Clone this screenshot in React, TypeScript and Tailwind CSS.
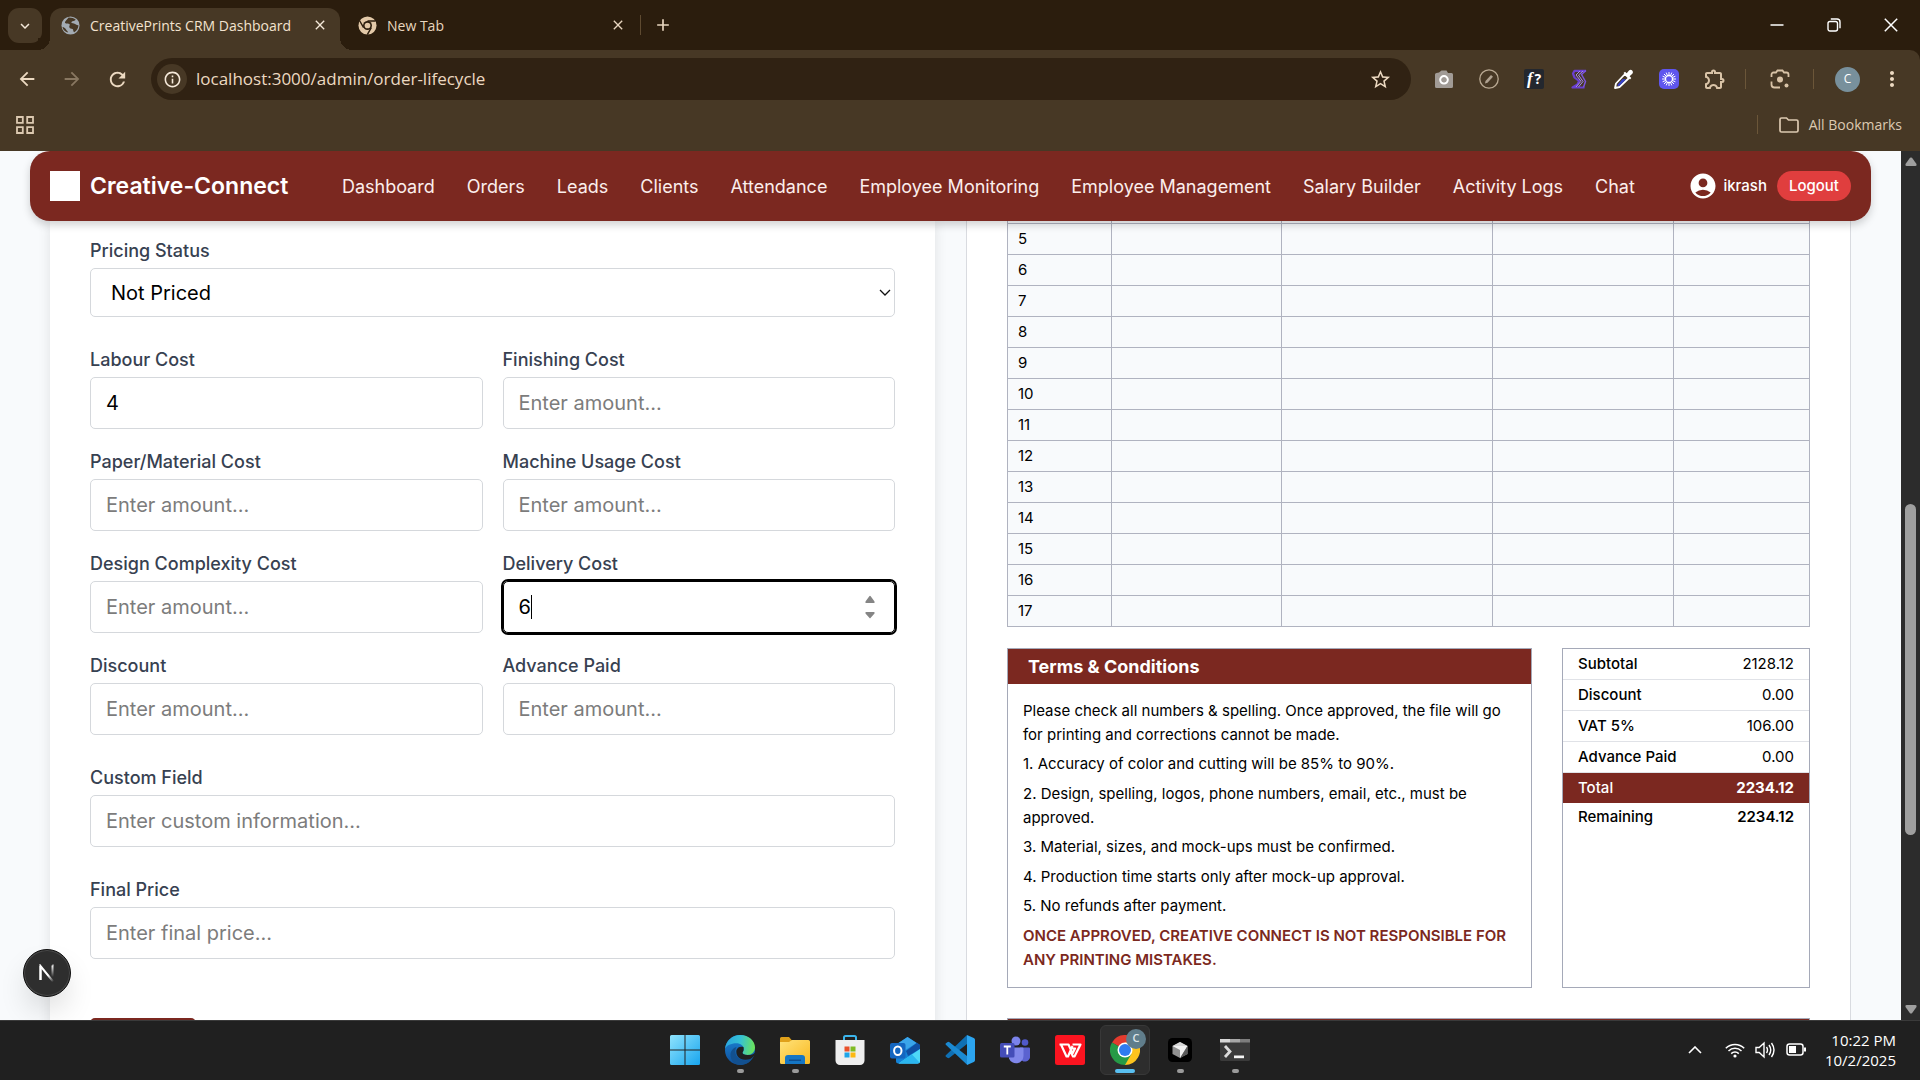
import React from "react";
import {
  MdAccountCircle,
  MdArrowBack,
  MdArrowForward,
  MdRefresh,
  MdOutlineInfo,
  MdStarBorder,
  MdOutlineExtension,
  MdMoreVert,
  MdClose,
  MdAdd,
  MdExpandMore,
} from "react-icons/md";

const CHROME_FONT = "font-['Open_Sans','Noto_Sans',sans-serif]";

/* ---------- browser window ---------- */

function GlobeIcon() {
  return (
    <svg viewBox="0 0 20 20" className="size-[19px]" aria-hidden="true">
      <circle cx="10" cy="10" r="9.5" fill="#a3abb3" />
      <path d="M8 1.5c3 .6 6 .2 7.500 2.500-1 1.600-3.500 1-4.500 2.400-.6 1.200 1.200 1.300 2.600 1.600 2 .5 2.600 1.900 4.800 1.700-.2 3.300-2 5.900-4.500 7.300-1.500-.4-.5-2.300-1.700-3.200-1.300-.9-3.200-.3-3.500-2.200-.2-1.500 1-1.900.4-2.900C8 7.600 5.600 8.600 4.300 7.300 3.600 5.800 6.500 3.500 8 1.500Z" fill="#473825" />
      <path d="M1.500 11.500c1.800.2 3.300 1.300 4 2.900.5 1.300 1.800 1.400 2 3-3.200-.7-5.500-3-6-5.900Z" fill="#473825" />
    </svg>
  );
}

function ChromeMono() {
  return (
    <svg viewBox="0 0 20 20" className="size-[19px]" aria-hidden="true">
      <circle cx="10" cy="10" r="9.500" fill="#e3c9a8" />
      <circle cx="10" cy="10" r="4.700" fill="#2b1d0d" />
      <circle cx="10" cy="10" r="3" fill="#e3c9a8" />
      <path d="M10 5.300h8.500M5.900 12.300 1.700 5M14 12.300 9.800 19.500" stroke="#2b1d0d" strokeWidth="1.500" />
    </svg>
  );
}

function TabStrip() {
  return (
    <header className="flex h-[50px] shrink-0 items-end bg-[#2b1d0d] pl-[8px] text-[#e8d6bf]">
      <button aria-label="Search tabs" className="mb-[7px] flex h-[35px] w-[34px] items-center justify-center rounded-[11px] bg-[#473825] text-[#f5e9da]">
        <MdExpandMore size={18} />
      </button>
      <div className="relative ml-[8px] flex h-[42px] w-[290px] items-center rounded-t-[12px] bg-[#473825] pb-[8px] pl-[11px] pr-[12px]">
        <span className="absolute -left-[12px] bottom-0 size-[12px] bg-[radial-gradient(circle_at_0_0,#2b1d0d_12px,#473825_12px)]" />
        <span className="absolute -right-[12px] bottom-0 size-[12px] bg-[radial-gradient(circle_at_100%_0,#2b1d0d_12px,#473825_12px)]" />
        <GlobeIcon />
        <span className="ml-[10px] flex-1 whitespace-nowrap text-[14px] text-[#f3e3cf]">CreativePrints CRM Dashboard</span>
        <button aria-label="Close tab" className="text-[#f5e9da]"><MdClose size={16} /></button>
      </div>
      <div className="flex h-[42px] w-[300px] items-center pb-[8px] pl-[18px] pr-[14px]">
        <ChromeMono />
        <span className="ml-[10px] flex-1 text-[14px]">New Tab</span>
        <button aria-label="Close tab"><MdClose size={16} /></button>
      </div>
      <div className="flex h-[42px] items-center gap-[12px] pb-[8px]">
        <span className="h-[20px] w-px bg-[#5e4a30]" />
        <button aria-label="New tab"><MdAdd size={20} /></button>
      </div>
      <div className="ml-auto flex h-[50px] items-center pr-[22px] text-white">
        <button aria-label="Minimize" className="mr-[43px]">
          <svg viewBox="0 0 14 14" className="size-[14px]"><path d="M.5 7h13" stroke="currentColor" strokeWidth="1.500" /></svg>
        </button>
        <button aria-label="Restore" className="mr-[43px]">
          <svg viewBox="0 0 14 14" className="size-[14px]" fill="none" stroke="currentColor" strokeWidth="1.400">
            <rect x="1" y="3.500" width="9.500" height="9.500" rx="2" />
            <path d="M3.800 1H10a3 3 0 0 1 3 3v6.200" />
          </svg>
        </button>
        <button aria-label="Close">
          <svg viewBox="0 0 14 14" className="size-[14px]"><path d="m.8.8 12.400 12.400M13.200.8.800 13.200" stroke="currentColor" strokeWidth="1.500" /></svg>
        </button>
      </div>
    </header>
  );
}

function Extensions() {
  return (
    <div className="flex items-center gap-[25px]">
      <svg viewBox="0 0 20 20" className="size-[20px]" aria-hidden="true">
        <path d="M5 3.500 7.500 1.500h5l1.500 2.500h3.500A1.500 1.500 0 0 1 19 5.500v12a1.500 1.500 0 0 1-1.500 1.500h-15A1.500 1.500 0 0 1 1 17.500v-12A1.500 1.500 0 0 1 2.500 4Z" fill="#a19b96" />
        <circle cx="10" cy="10.800" r="3.700" fill="none" stroke="#fff" strokeWidth="2.200" />
        <circle cx="10" cy="10.800" r="2.500" fill="#a19b96" />
      </svg>
      <svg viewBox="0 0 20 20" className="size-[20px]" aria-hidden="true">
        <circle cx="10" cy="10" r="9.200" fill="none" stroke="#b9a993" strokeWidth="1.300" />
        <path d="m6.500 12 5.500-6 2 1.800-5.500 6-2.500.7Z" fill="#b0a291" />
      </svg>
      <svg viewBox="0 0 20 20" className="size-[20px]" aria-hidden="true">
        <rect width="20" height="20" rx="2" fill="#23272e" />
        <text x="3" y="14.500" fontSize="17" fontStyle="italic" fontWeight="700" fill="#fff" fontFamily="Liberation Serif, serif">f</text>
        <text x="10.500" y="15" fontSize="14" fontWeight="700" fill="#fff" fontFamily="Open Sans, sans-serif">?</text>
      </svg>
      <svg viewBox="0 0 20 20" className="size-[20px]" fill="none" aria-hidden="true">
        <path d="M17 1.800H5.500L4 4.500l1.500 4L10 12l-1.500 3.500-5 3h12" stroke="#6a3fd0" strokeWidth="2.200" strokeLinejoin="round" />
        <path d="M17 1.500 12.500 5.500l4 7-2 5.800" stroke="#7b55dc" strokeWidth="1.500" />
        <path d="M14 2 9.500 6l4.500 6.500-4.500 5.500M11 2 7 6l5 6.300-5 5.700" stroke="#a58cf0" strokeWidth="1" />
      </svg>
      <svg viewBox="0 0 20 20" className="size-[20px]" aria-hidden="true">
        <path d="m11 5-9 9.500-1 4.500 4.500-1 9.500-9Z" fill="#473825" stroke="#fff" strokeWidth="1.800" strokeLinejoin="round" />
        <path d="m8.500 10 3.500.3-6.500 6.500-2 .4.500-2Z" fill="#3742c8" />
        <path d="M9.500 4 11 2.700l1.700 1.600L15 1.500c2.200-2 5.200 1 3.300 3.300L15.600 7.300 17.300 9 16 10.500Z" fill="#fff" />
      </svg>
      <svg viewBox="0 0 20 20" className="size-[20px]" aria-hidden="true">
        <rect width="20" height="20" rx="5" fill="#5f55ee" />
        <circle cx="10" cy="10" r="3.500" fill="none" stroke="#fff" strokeWidth="1.300" />
        <path d="M10 3v3.500M10 13.500V17M3 10h3.500M13.500 10H17M5 5l2.500 2.500M12.500 12.500 15 15M15 5l-2.500 2.500M7.500 12.500 5 15M7.200 3.600l1.300 3M11.500 13.400l1.300 3M3.600 12.800l3-1.300M13.400 8.500l3-1.300M3.600 7.200l3 1.300M13.400 11.500l3 1.300M12.800 3.600l-1.300 3M8.500 13.400l-1.300 3" stroke="#fff" strokeWidth="1" />
      </svg>
      <MdOutlineExtension size={24} className="-mx-[1px] text-[#d9c3a7]" />
    </div>
  );
}

function Toolbar() {
  return (
    <div className="flex h-[58px] shrink-0 items-center rounded-tr-[10px] bg-[#473825] pl-[16px] pr-[16px] text-[#ecd9c1]">
      <button aria-label="Back"><MdArrowBack size={22} /></button>
      <button aria-label="Forward" className="ml-[23px] text-[#887761]"><MdArrowForward size={22} /></button>
      <button aria-label="Reload" className="ml-[23px]"><MdRefresh size={23} /></button>
      <div className="ml-[22px] flex h-[42px] flex-1 items-center rounded-full bg-[#302213] pl-[6px] pr-[19px]">
        <button aria-label="Site information" className="flex size-[30px] items-center justify-center rounded-full bg-[#473825] text-[#f5e9da]">
          <MdOutlineInfo size={19} />
        </button>
        <input
          aria-label="Address"
          defaultValue="localhost:3000/admin/order-lifecycle"
          className="ml-[9px] min-w-0 flex-1 bg-transparent text-[17px] text-[#ecd9c1] outline-none"
        />
        <button aria-label="Bookmark this tab"><MdStarBorder size={23} /></button>
      </div>
      <div className="ml-[23px]"><Extensions /></div>
      <span className="ml-[19px] h-[20px] w-px bg-[#6b5639]" />
      <button aria-label="Lens" className="ml-[24px] text-[#d9c3a7]">
        <svg viewBox="0 0 20 20" className="size-[20px]" fill="none" stroke="currentColor" strokeWidth="1.800">
          <path d="M1.500 8V5.500a2 2 0 0 1 2-2H6L7.500 1.500h5L14 3.500h2.500a2 2 0 0 1 2 2V8M1.500 12.500v3a3 3 0 0 0 3 3H10" />
          <circle cx="10" cy="10.500" r="3" fill="currentColor" stroke="none" />
          <circle cx="16.500" cy="16.500" r="2" fill="currentColor" stroke="none" />
        </svg>
      </button>
      <span className="ml-[23px] h-[20px] w-px bg-[#6b5639]" />
      <button aria-label="Profile" className="ml-[21px] flex size-[25px] items-center justify-center rounded-full bg-[#78909c] text-[12px] text-white">C</button>
      <button aria-label="Menu" className="ml-[20px]"><MdMoreVert size={24} /></button>
    </div>
  );
}

function BookmarksBar() {
  return (
    <div className="flex h-[43px] shrink-0 items-center bg-[#473825] pb-[10px] pl-[16px] pr-[18px] text-[#dcc9b1]">
      <button aria-label="Apps">
        <svg viewBox="0 0 18 18" className="size-[18px]" fill="none" stroke="currentColor" strokeWidth="1.800">
          <path d="M1 1h5.800v5.800H1zM11.200 1H17v5.800h-5.800zM1 11.200h5.800V17H1zM11.200 11.200H17V17h-5.800z" />
        </svg>
      </button>
      <span className="ml-auto h-[19px] w-px bg-[#6b5639]" />
      <button className="ml-[21px] flex items-center gap-[10px] text-[14px]">
        <svg viewBox="0 0 20 16" className="h-[16px] w-[20px]" fill="none" stroke="currentColor" strokeWidth="1.700">
          <path d="M1 2.500A1.500 1.500 0 0 1 2.500 1H7.500L9.500 3h8A1.500 1.500 0 0 1 19 4.500v9a1.500 1.500 0 0 1-1.500 1.500h-15A1.500 1.500 0 0 1 1 13.500Z" />
        </svg>
        All Bookmarks
      </button>
    </div>
  );
}

/* ---------- web page ---------- */

const NAV = [
  "Dashboard", "Orders", "Leads", "Clients", "Attendance", "Employee Monitoring",
  "Employee Management", "Salary Builder", "Activity Logs", "Chat",
];

function Navbar() {
  return (
    <nav className="relative z-10 mx-[30px] flex h-[70px] shrink-0 items-center justify-between whitespace-nowrap rounded-[20px] bg-[#7b2820] px-[20px] text-white shadow-[0_4px_8px_rgba(0,0,0,0.18)]">
      <div className="flex items-center gap-[10px]">
        <span className="size-[30px] bg-white" />
        <span className="text-[23px] font-semibold">Creative-Connect</span>
      </div>
      <div className="flex items-center gap-[32px] text-[18px] text-[#fbeeec]">
        {NAV.map((n) => (
          <a key={n} href="#">{n}</a>
        ))}
      </div>
      <div className="flex items-center text-[15px] font-medium">
        <MdAccountCircle size={30} />
        <span className="ml-[5px]">ikrash</span>
        <button className="ml-[10px] h-[30px] rounded-full bg-[#e03e3e] px-[12px]">Logout</button>
      </div>
    </nav>
  );
}

function Field({ id, label, placeholder = "Enter amount...", value, type = "number", focused = false }: {
  id: string; label: string; placeholder?: string; value?: string; type?: "number" | "text"; focused?: boolean;
}) {
  return (
    <div>
      <label htmlFor={id} className="mb-[5px] block text-[18px] font-medium leading-[25px] text-[#374151]">{label}</label>
      <div className="relative">
        <input
          id={id}
          type={type}
          placeholder={placeholder}
          defaultValue={value}
          className={
            focused
              ? "block h-[52px] w-full rounded-[5px] border border-black px-[15px] text-[20px] text-black outline-2 outline-black [appearance:textfield]"
              : "block h-[52px] w-full rounded-[5px] border border-[#d5d8dc] px-[15px] text-[20px] text-black [appearance:textfield] placeholder:text-[#7c7c7c]"
          }
        />
        {focused && (
          <>
            <span className="absolute left-[28px] top-[14px] h-[24px] w-px bg-black" />
            <svg viewBox="0 0 10 24" className="absolute right-[20px] top-[14px] h-[24px] w-[10px]" fill="#858585" aria-hidden="true">
              <path d="M4.300 1.200Q5 .2 5.700 1.200L9.500 6.400Q10 8 9 8H1Q0 8 .5 6.400ZM4.300 22.800Q5 23.800 5.700 22.800L9.500 18.600Q10 17 9 17H1Q0 17 .5 18.600Z" />
            </svg>
          </>
        )}
      </div>
    </div>
  );
}

function PricingForm() {
  return (
    <form className="bg-white px-[40px] pt-[17px] shadow-[0_2px_12px_rgba(0,0,0,0.1)]">
      <label htmlFor="status" className="mb-[5px] block text-[18px] font-medium leading-[25px] text-[#374151]">Pricing Status</label>
      <div className="relative mb-[30px]">
        <select id="status" className="block h-[49px] w-full appearance-none rounded-[5px] border border-[#d5d8dc] bg-white px-[20px] text-[20px] text-black">
          <option>Not Priced</option>
        </select>
        <svg viewBox="0 0 12 8" className="pointer-events-none absolute right-[4px] top-[21px] h-[8px] w-[12px]" fill="none" stroke="#111" strokeWidth="1.300" aria-hidden="true">
          <path d="m1 1 5 5 5-5" />
        </svg>
      </div>
      <div className="mb-[30px] grid grid-cols-2 gap-[20px]">
        <Field id="labour" label="Labour Cost" value="4" />
        <Field id="finishing" label="Finishing Cost" />
        <Field id="paper" label="Paper/Material Cost" />
        <Field id="machine" label="Machine Usage Cost" />
        <Field id="design" label="Design Complexity Cost" />
        <Field id="delivery" label="Delivery Cost" value="6" focused />
        <Field id="discount" label="Discount" />
        <Field id="advance" label="Advance Paid" />
      </div>
      <div className="flex flex-col gap-[30px]">
        <Field id="custom" label="Custom Field" placeholder="Enter custom information..." type="text" />
        <Field id="final" label="Final Price" placeholder="Enter final price..." />
      </div>
      <button type="button" aria-label="Save" className="mt-[59px] h-[45px] w-[106px] rounded-[5px] bg-[#7b2820]" />
    </form>
  );
}

const ROWS = ["5", "6", "7", "8", "9", "10", "11", "12", "13", "14", "15", "16", "17"];
const CELL = "border border-[#b0b3c0]";

const TERMS = [
  "Please check all numbers & spelling. Once approved, the file will go for printing and corrections cannot be made.",
  "1. Accuracy of color and cutting will be 85% to 90%.",
  "2. Design, spelling, logos, phone numbers, email, etc., must be approved.",
  "3. Material, sizes, and mock-ups must be confirmed.",
  "4. Production time starts only after mock-up approval.",
  "5. No refunds after payment.",
];

const TOTALS = [
  ["Subtotal", "2128.12"],
  ["Discount", "0.00"],
  ["VAT 5%", "106.00"],
  ["Advance Paid", "0.00"],
];

function Quotation() {
  return (
    <section className="border-x border-[#d9dbe0] bg-white px-[40px] text-[15px] text-black">
      <table className="w-full table-fixed border-collapse bg-[#f8fafc]">
        <colgroup>
          <col className="w-[104px]" />
          <col className="w-[170px]" />
          <col className="w-[211px]" />
          <col className="w-[181px]" />
          <col />
        </colgroup>
        <tbody>
          <tr className="h-[2px]">
            {[0, 1, 2, 3, 4].map((c) => (
              <td key={c} className="border-x border-b border-[#b0b3c0] p-0" />
            ))}
          </tr>
          {ROWS.map((r) => (
            <tr key={r} className="h-[31px]">
              <td className={CELL + " px-[10px] py-0 leading-[20px]"}>{r}</td>
              <td className={CELL} />
              <td className={CELL} />
              <td className={CELL} />
              <td className={CELL} />
            </tr>
          ))}
        </tbody>
      </table>
      <div className="mt-[21px] grid grid-cols-[minmax(0,1fr)_248px] gap-[30px]">
        <div className="border border-[#a5a9b8] pb-[15px]">
          <h3 className="h-[35px] bg-[#7b2820] px-[20px] text-[18px] font-bold leading-[35px] text-white">Terms &amp; Conditions</h3>
          <div className="flex flex-col gap-[5px] px-[15px] pt-[15px] leading-relaxed">
            {TERMS.map((t) => (
              <p key={t}>{t}</p>
            ))}
            <p className="font-semibold text-[#7b2820]">ONCE APPROVED, CREATIVE CONNECT IS NOT RESPONSIBLE FOR ANY PRINTING MISTAKES.</p>
          </div>
        </div>
        <div className="border border-[#a5a9b8]">
          <table className="w-full border-collapse">
            <tbody>
              {TOTALS.map(([k, v]) => (
                <tr key={k} className="h-[31px] border-b border-[#e0e2e7]">
                  <th scope="row" className="py-0 pl-[15px] text-left font-medium">{k}</th>
                  <td className="py-0 pr-[15px] text-right">{v}</td>
                </tr>
              ))}
              <tr className="h-[30px] bg-[#7b2820] text-white">
                <th scope="row" className="py-0 pl-[15px] text-left font-medium">Total</th>
                <td className="py-0 pr-[15px] text-right font-bold">2234.12</td>
              </tr>
              <tr className="h-[30px]">
                <th scope="row" className="py-0 pl-[15px] text-left font-medium">Remaining</th>
                <td className="py-0 pr-[15px] text-right font-semibold">2234.12</td>
              </tr>
            </tbody>
          </table>
        </div>
      </div>
      <div className="mt-[30px] h-[40px] border border-[#a5a9b8] bg-[#7b2820]" />
    </section>
  );
}

function Scrollbar() {
  return (
    <div className="flex w-[19px] shrink-0 flex-col items-center bg-[#2c2c2c] py-[6px]" aria-hidden="true">
      <svg viewBox="0 0 12 9" className="h-[9px] w-[12px]" fill="#9f9f9f"><path d="M5 .8Q6 0 7 .8L11.500 7Q12 9 10.500 9h-9Q0 9 .5 7Z" /></svg>
      <div className="h-[338px]" />
      <div className="h-[331px] w-[11px] rounded-full bg-[#9f9f9f]" />
      <svg viewBox="0 0 12 9" className="mt-auto h-[9px] w-[12px]" fill="#9f9f9f"><path d="M5 8.200Q6 9 7 8.200L11.500 2Q12 0 10.500 0h-9Q0 0 .5 2Z" /></svg>
    </div>
  );
}

function DevBadge() {
  return (
    <button aria-label="Open developer tools" className="absolute bottom-[23px] left-[23px] z-20 flex size-[48px] items-center justify-center rounded-full border border-[#111] bg-[#2e2e2e] shadow-[0_16px_32px_-8px_rgba(0,0,0,0.24)] ring-1 ring-inset ring-[#4a4a4a]">
      <svg viewBox="0 0 18 18" className="size-[18px]" fill="none" strokeWidth="2">
        <defs>
          <linearGradient id="nd" x1="8" y1="9" x2="15" y2="17" gradientUnits="userSpaceOnUse"><stop offset=".3" stopColor="#fff" /><stop offset="1" stopColor="#fff" stopOpacity="0.100" /></linearGradient>
          <linearGradient id="nv" x1="0" y1="1" x2="0" y2="13" gradientUnits="userSpaceOnUse"><stop stopColor="#fff" /><stop offset="1" stopColor="#fff" stopOpacity="0" /></linearGradient>
        </defs>
        <path d="M2.500 16V2l12.500 15.500" stroke="url(#nd)" />
        <path d="M2.500 16V2" stroke="#fff" />
        <path d="M14.500 1.500h.01V13" stroke="url(#nv)" />
      </svg>
    </button>
  );
}

/* ---------- taskbar ---------- */

const svgCls = "size-[30px]";

const APPS: { name: string; running?: boolean; active?: boolean; icon: React.ReactNode }[] = [
  {
    name: "Start",
    icon: (
      <svg viewBox="0 0 30 30" className={svgCls}>
        <defs><linearGradient id="win" x1="0" y1="0" x2="1" y2="1"><stop stopColor="#8fe3fd" /><stop offset="1" stopColor="#18a5ee" /></linearGradient></defs>
        <path d="M1.500 0h13v14.500H0v-13A1.500 1.500 0 0 1 1.500 0ZM15.500 0h13A1.500 1.500 0 0 1 30 1.500v13H15.500ZM0 15.500h14.500V30h-13A1.500 1.500 0 0 1 0 28.500ZM15.500 15.500H30v13a1.500 1.500 0 0 1-1.500 1.500h-13Z" fill="url(#win)" />
      </svg>
    ),
  },
  {
    name: "Edge",
    running: true,
    icon: (
      <svg viewBox="0 0 30 30" className={svgCls}>
        <defs>
          <linearGradient id="e1" x1="0" y1=".3" x2="1" y2=".4"><stop stopColor="#2aa5e0" /><stop offset=".5" stopColor="#35c1d5" /><stop offset="1" stopColor="#6be35a" /></linearGradient>
          <linearGradient id="e2" x1="0" y1="0" x2="0" y2="1"><stop stopColor="#1b86d8" /><stop offset="1" stopColor="#0f4f9a" /></linearGradient>
        </defs>
        <circle cx="15" cy="15" r="15" fill="url(#e2)" />
        <path d="M0 14C1 5 8 0 15 0c9 0 15 6 15 12.500 0 4.500-3.500 7.500-7.500 7.500-3.500 0-5-1.200-5-2.200 0-.8 1.200-1.400 1.200-3.800 0-3-3-5.700-7.500-5.700C6 8.300 1.500 10.500 0 14Z" fill="url(#e1)" />
        <path d="M11.500 12C8.500 17 11 25 20 25.500c3 .1 5.500-1 7.500-2.500-2.500 4.500-7 7-12.500 7C9 29.500 5.500 25 5.500 20c0-4 2.500-7 6-8Z" fill="#12508f" />
        <path d="M18.500 12c-3-1-6 0-7 3-1 4.500 2 9.500 8.500 9.800 4 .1 7-1.300 8.500-3.300q2-2 1.500-4c-1.500 2-4.500 2.800-7.500 2.500-3.500 0-5-1.200-5-2.200 0-.8 1.200-1.400 1.200-3.800Z" fill="#202020" />
      </svg>
    ),
  },
  {
    name: "File Explorer",
    running: true,
    icon: (
      <svg viewBox="0 0 30 30" className={svgCls}>
        <defs><linearGradient id="fx" x1="0" y1="0" x2="1" y2="1"><stop stopColor="#ffe27a" /><stop offset="1" stopColor="#f8b920" /></linearGradient></defs>
        <path d="M0 3.500A1.500 1.500 0 0 1 1.500 2H9l3 3.500V9H0Z" fill="#e0a11b" />
        <path d="M0 7h9l3-2h16.500A1.500 1.500 0 0 1 30 6.500v21a1.500 1.500 0 0 1-1.500 1.500h-27A1.500 1.500 0 0 1 0 27.500Z" fill="url(#fx)" />
        <path d="M5 29v-6a3 3 0 0 1 3-3h14a3 3 0 0 1 3 3v6Z" fill="#1576c4" />
        <path d="M9 24.500h12v1.500H9Z" fill="#0e4f91" />
      </svg>
    ),
  },
  {
    name: "Microsoft Store",
    icon: (
      <svg viewBox="0 0 30 30" className={svgCls}>
        <path d="M9 6V2.500A1.500 1.500 0 0 1 10.500 1h9A1.500 1.500 0 0 1 21 2.500V6" fill="none" stroke="#3bb5ec" strokeWidth="2" />
        <path d="M.5 5h29v20.500A4.500 4.500 0 0 1 25 30H5A4.500 4.500 0 0 1 .5 25.500Z" fill="#efefef" />
        <path d="M9.500 11.500h5v5h-5z" fill="#e9512b" /><path d="M15.500 11.500h5v5h-5z" fill="#7fba22" />
        <path d="M9.500 17.500h5v5h-5z" fill="#1fa5e8" /><path d="M15.500 17.500h5v5h-5z" fill="#fdb912" />
      </svg>
    ),
  },
  {
    name: "Outlook",
    icon: (
      <svg viewBox="0 0 30 30" className={svgCls}>
        <path d="M6 9.500 17.500 2 30 10v16a2.500 2.500 0 0 1-2.500 2.500h-19A2.500 2.500 0 0 1 6 26Z" fill="#1483d8" />
        <path d="m8 8.500 9.500-6.500 9 6L14 16Z" fill="#3aa5ea" />
        <path d="M16 16 27 7.800l3 2.200v4L18 21Z" fill="#0f4fa3" />
        <path d="M30 14v12a2.500 2.500 0 0 1-2.500 2.500h-19Z" fill="#4fd8f7" />
        <path d="m15 24 7-4.500 7.500 8-2 1h-19Z" fill="#2bb6ef" />
        <rect x="0" y="8" width="15.500" height="15.500" rx="2" fill="#1466c0" />
        <ellipse cx="7.800" cy="15.700" rx="3.700" ry="4.300" fill="none" stroke="#fff" strokeWidth="2" />
      </svg>
    ),
  },
  {
    name: "Visual Studio Code",
    icon: (
      <svg viewBox="0 0 30 30" className={svgCls}>
        <path d="M.8 20.300 22 0v9L4.500 22.700Q3.500 23.500 2.300 22.800L.7 21.500Q.2 21 .8 20.300Z" fill="#0f70b4" />
        <path d="M.8 9.800 22.300 30V21.300L4.500 7.300Q3.500 6.500 2.300 7.200L.7 8.500Q.2 9 .8 9.800Z" fill="#1b8ad2" />
        <path d="M22 0 28.800 3A2 2 0 0 1 30 4.800v20.400A2 2 0 0 1 28.800 27L22 30V0Z" fill="#2ca5f0" />
      </svg>
    ),
  },
  {
    name: "Teams",
    icon: (
      <svg viewBox="0 0 30 30" className={svgCls}>
        <circle cx="25" cy="7.500" r="3.300" fill="#5059c9" />
        <path d="M20 12.500h9a1 1 0 0 1 1 1v7a5 5 0 0 1-10 2Z" fill="#5b62d0" />
        <circle cx="16" cy="6" r="4.500" fill="#7b83eb" />
        <path d="M10 12.500h12.500a1 1 0 0 1 1 1V21a7.500 7.500 0 0 1-14.500 2.500Z" fill="#8087ea" />
        <rect x="0" y="8" width="14.500" height="14.500" rx="1.500" fill="#444db8" />
        <path d="M3.800 11.500h7M7.300 11.500v8" stroke="#fff" strokeWidth="1.800" />
      </svg>
    ),
  },
  {
    name: "WPS Office",
    icon: (
      <svg viewBox="0 0 30 30" className={svgCls}>
        <rect width="30" height="30" rx="2.500" fill="#fb1420" />
        <path d="M4.500 9.500h9l4 9 2.500-5h-3.500M6 9.500l5.500 12h1.500l4.500-10.500M17.500 9.500h8L19.500 21.500h-1.500l-2.500-5" fill="none" stroke="#fff" strokeWidth="2.200" strokeLinejoin="round" />
      </svg>
    ),
  },
  {
    name: "Chrome",
    active: true,
    icon: (
      <svg viewBox="0 0 30 30" className={svgCls}>
        <path d="M15 15 2 7.500A15 15 0 0 1 28 7.500Z" fill="#e33b2e" />
        <path d="M15 15V7.500h13A15 15 0 0 1 15 30Z" fill="#fcc31e" />
        <path d="M15 15 21.500 18.800 15 30A15 15 0 0 1 2 7.500Z" fill="#269a46" />
        <circle cx="15" cy="15" r="7.500" fill="#fff" />
        <circle cx="15" cy="15" r="6" fill="#2f7bf0" />
      </svg>
    ),
  },
  {
    name: "Cursor",
    running: true,
    icon: (
      <svg viewBox="0 0 30 30" className={svgCls}>
        <rect x="3" y="3" width="24" height="24" rx="4.500" fill="#000" />
        <path d="m15 7 7.500 4v8L15 23l-7.500-4v-8Z" fill="#8f8f8f" />
        <path d="m15 7 7.500 4H7.500Z" fill="#d5d5d5" />
        <path d="M7.500 11h15L15 23.500V15Z" fill="#efefef" />
        <path d="M22.500 11v8L15 23Z" fill="#5a5a5a" />
      </svg>
    ),
  },
  {
    name: "Terminal",
    running: true,
    icon: (
      <svg viewBox="0 0 30 30" className={svgCls}>
        <path d="M0 4h30v20.500a1.500 1.500 0 0 1-1.500 1.500h-27A1.500 1.500 0 0 1 0 24.500Z" fill="#3a3a3a" />
        <path d="M0 4h10v3.500H0z" fill="#d8d8d8" /><path d="M10 4h10v3.500H10z" fill="#a8a8a8" /><path d="M20 4h10v3.500H20z" fill="#7d7d7d" />
        <path d="m5 11 5 5.500-5 5.500" fill="none" stroke="#dcdcdc" strokeWidth="2.800" />
        <path d="M14 20.500h10v2.700H14z" fill="#f5f5f5" />
      </svg>
    ),
  },
];

function Taskbar() {
  return (
    <footer className="grid h-[60px] shrink-0 grid-cols-[1fr_auto_1fr] items-center border-t border-[#3a3a3a] bg-[#202020] pb-[2px] text-white">
      <span />
      <div className="flex gap-[5px]">
        {APPS.map((a) => (
          <button
            key={a.name}
            aria-label={a.name}
            className={a.active ? "relative flex size-[50px] items-center justify-center rounded-[6px] border border-[#383838] bg-[#2d2d2d]" : "relative flex size-[50px] items-center justify-center"}
          >
            {a.icon}
            {a.running && <span className="absolute bottom-[2px] h-[4px] w-[7px] rounded-full bg-[#9a9a9a]" />}
            {a.active && <span className="absolute bottom-[1px] h-[4px] w-[20px] rounded-full bg-[#59bff0]" />}
            {a.active && (
              <span className="absolute right-[3px] top-[3px] flex size-[20px] items-center justify-center rounded-full bg-[#607d8b] text-[11px] font-semibold text-[#dfe6ea]">C</span>
            )}
          </button>
        ))}
      </div>
      <div className="flex items-center justify-end pr-[24px]">
        <svg viewBox="0 0 14 8" className="h-[8px] w-[14px]" fill="none" stroke="currentColor" strokeWidth="1.600"><path d="m1 7 6-6 6 6" /></svg>
        <svg viewBox="0 0 20 16" className="ml-[23px] h-[16px] w-[20px]" fill="none" stroke="currentColor" strokeWidth="1.500">
          <path d="M.8 6.200a13 13 0 0 1 18.400 0M3.500 9a9.200 9.200 0 0 1 13 0M6.200 11.600a5.400 5.400 0 0 1 7.600 0" />
          <circle cx="10" cy="14" r="1.600" fill="currentColor" stroke="none" />
        </svg>
        <svg viewBox="0 0 20 18" className="ml-[10px] h-[18px] w-[20px]" fill="none" stroke="currentColor" strokeWidth="1.400">
          <path d="M1 6.500h3.200L9 2v14l-4.800-4.500H1ZM11.500 6q2 3 0 6M14 4q3.500 5 0 10M16.500 2q5 7 0 14" />
        </svg>
        <svg viewBox="0 0 20 13" className="ml-[11px] h-[13px] w-[20px]" fill="none" stroke="currentColor" strokeWidth="1.500">
          <rect x="1" y="1" width="16" height="11" rx="2.500" />
          <path d="M3 3h7v7H3z" fill="currentColor" stroke="none" /><path d="M19 4.500v4" strokeWidth="2" />
        </svg>
        <div className="ml-[19px] text-right text-[15px] leading-[20px]">
          <div>10:22 PM</div>
          <div>10/2/2025</div>
        </div>
      </div>
    </footer>
  );
}

export default function App() {
  return (
    <div className={"flex h-screen flex-col overflow-hidden " + CHROME_FONT}>
      <TabStrip />
      <div className="shrink-0 bg-[#2b1d0d]"><Toolbar /></div>
      <BookmarksBar />
      <div className="flex min-h-0 flex-1">
        <main className="relative flex min-w-0 flex-1 flex-col overflow-hidden bg-[#f8fafc] font-['Inter',sans-serif]">
          <Navbar />
          <div className="grid min-h-0 flex-1 grid-cols-2 gap-[31px] overflow-hidden px-[50px]">
            <PricingForm />
            <Quotation />
          </div>
          <DevBadge />
        </main>
        <Scrollbar />
      </div>
      <Taskbar />
    </div>
  );
}
